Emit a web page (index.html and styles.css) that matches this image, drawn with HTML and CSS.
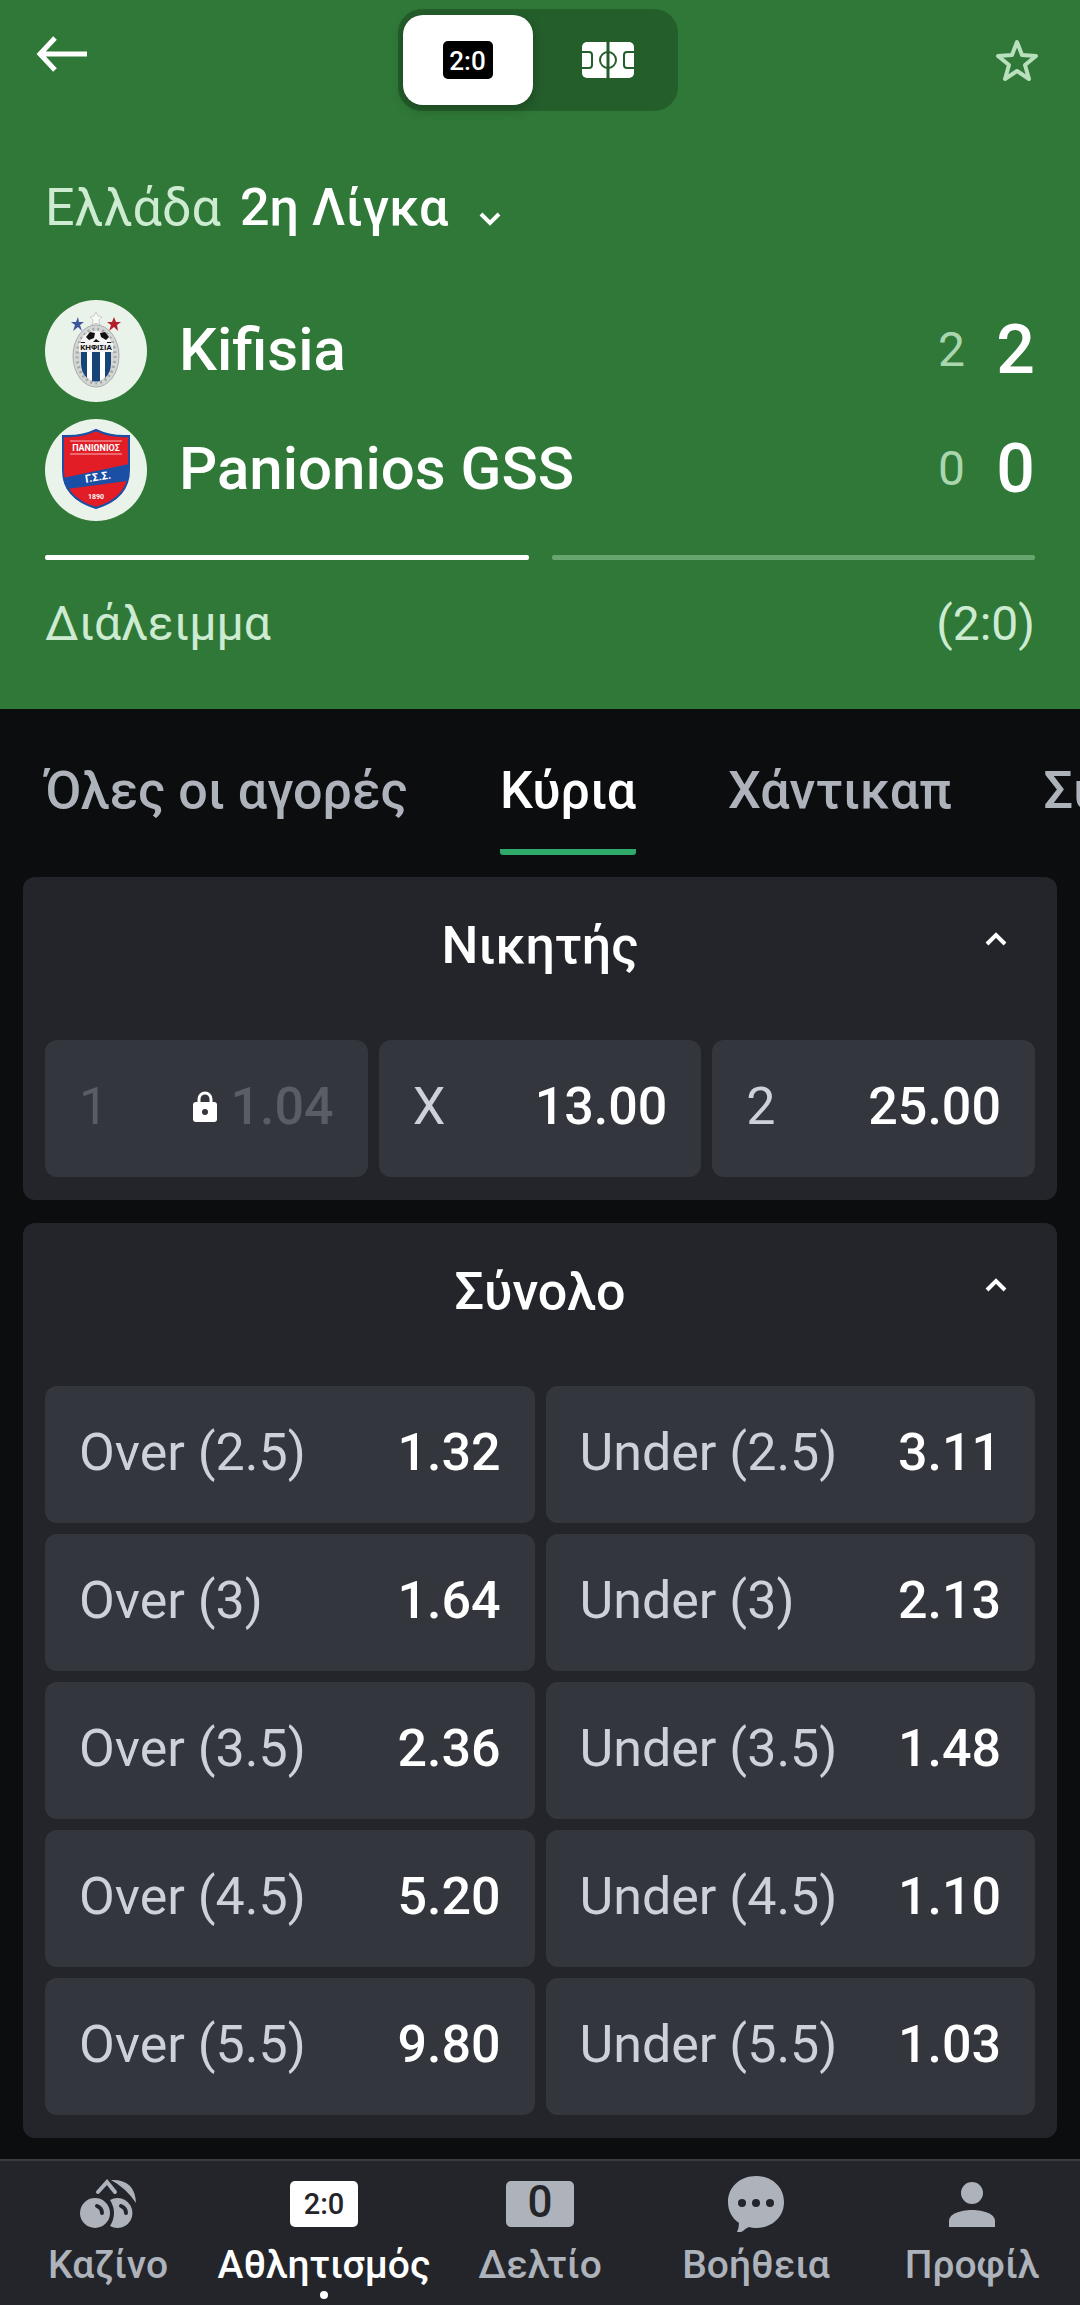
FILE: index.html
```html
<!DOCTYPE html>
<html lang="el">
<head>
    <meta charset="UTF-8">
    <meta name="viewport" content="width=device-width, initial-scale=1.0">
    <link rel="stylesheet" href="styles.css">
    <title>Kifisia - Panionios GSS</title>
</head>
<body>
    <header class="match">
        <div class="topbar">
            <button class="icon-button back" aria-label="Πίσω">
                <svg width="52" height="36" viewBox="0 0 52 36" fill="none" stroke="#fff" stroke-width="5">
                    <path d="M19 2 4 18l15 16M4 18h47"/>
                </svg>
            </button>
            <div class="switch">
                <button class="switch-item active"><span class="score-chip">2:0</span></button>
                <button class="switch-item" aria-label="Γήπεδο">
                    <svg width="52" height="36" viewBox="0 0 52 36">
                        <rect width="52" height="36" rx="5" fill="#fff"/>
                        <g fill="none" stroke="#245e2b" stroke-width="2">
                            <path d="M26 0v36" stroke-width="3"/>
                            <circle cx="26" cy="18" r="8"/>
                            <path d="M0 10h7q3 0 3 3v10q0 3-3 3H0M52 10h-7q-3 0-3 3v10q0 3 3 3h7"/>
                        </g>
                    </svg>
                </button>
            </div>
            <button class="icon-button favourite" aria-label="Αγαπημένα">
                <svg width="44" height="44" viewBox="0 0 44 44" fill="none" stroke="#b9e0bd" stroke-width="4" stroke-linejoin="round">
                    <path d="M22 4l5 13 14 1-11 9 4 14-12-8-12 8 4-14L3 18l14-1z"/>
                </svg>
            </button>
        </div>

        <button class="league">
            <span class="country">Ελλάδα</span>
            <span>2η Λίγκα</span>
            <svg class="league-arrow" width="22" height="15" viewBox="0 0 22 15" fill="none" stroke="#fff" stroke-width="4">
                <path d="M2 2l9 9 9-9"/>
            </svg>
        </button>

        <div class="team">
            <svg class="crest" viewBox="0 0 102 102">
                <circle cx="51" cy="51" r="51" fill="#e9f3ea"/>
                <path d="M51 12l2 4 4 1-3 3 1 5-4-2-4 2 1-5-3-3 4-1z" fill="#f8f8f4" stroke="#ccc" stroke-width="1"/>
                <path d="M33 17l1 5h5l-4 3 2 6-4-4-5 4 2-6-4-3h5z" fill="#3c559c"/>
                <path d="M69 17l2 5h5l-4 3 1 6-4-4-5 4 2-6-4-3h5z" fill="#b3202b"/>
                <ellipse cx="51" cy="56" rx="23" ry="31" fill="#d3d6d5" stroke="#a9adac"/>
                <ellipse cx="51" cy="56" rx="19" ry="27" fill="none" stroke="#a4a8a8" stroke-width="3" stroke-dasharray="2 3"/>
                <path d="M36 52h30v12q0 13-15 18-15-5-15-18z" fill="#fff"/>
                <path d="M36 52h6v26q-6-6-6-14zM47 52h8v29q-4 1-8 0zM60 52h6v12q0 8-6 14z" fill="#164477"/>
                <path d="M36 43a15 12 0 0 1 30 0z" fill="#f4f4f4"/>
                <path d="M41 37l4-5 5 1-1 5-5 2zM55 33l5-1 4 5-3 3-5-3zM48 42l3-3 4 3zM36 42h4v2h-4zM62 42h4v2h-4z" fill="#111"/>
                <rect x="34" y="43" width="34" height="9" fill="#f2f2f2"/>
                <text x="51" y="50" text-anchor="middle" class="crest-name">ΚΗΦΙΣΙΑ</text>
            </svg>
            <span class="team-name">Kifisia</span>
            <span class="half-score">2</span>
            <span class="full-score">2</span>
        </div>
        <div class="team">
            <svg class="crest" viewBox="0 0 102 102">
                <circle cx="51" cy="51" r="51" fill="#e9f3ea"/>
                <path d="M18 17q19 1 33-6 14 7 33 6v34q0 28-33 38Q18 79 18 51z" fill="#e21d26" stroke="#1a4fa5" stroke-width="2"/>
                <path d="M18 59l66-14v10q-1 4-2 7l-60 8q-3-5-4-11z" fill="#1a4fa5"/>
                <path d="M25 22h52M25 35h52" stroke="#f6b8b8" stroke-width="1"/>
                <text x="51" y="32" text-anchor="middle" class="crest-title">ΠΑΝΙΩΝΙΟΣ</text>
                <text x="53" y="62" text-anchor="middle" class="crest-initials" transform="rotate(-9 51 58)">Γ.Σ.Σ.</text>
                <text x="51" y="80" text-anchor="middle" class="crest-year">1890</text>
            </svg>
            <span class="team-name">Panionios GSS</span>
            <span class="half-score">0</span>
            <span class="full-score">0</span>
        </div>

        <div class="periods">
            <span class="period played"></span>
            <span class="period"></span>
        </div>
        <div class="status">
            <span>Διάλειμμα</span>
            <span>(2:0)</span>
        </div>
    </header>

    <nav class="tabs">
        <a class="tab" href="#">Όλες οι αγορές</a>
        <a class="tab active" href="#">Κύρια</a>
        <a class="tab" href="#">Χάντικαπ</a>
        <a class="tab" href="#">Σύνολο</a>
    </nav>

    <main class="markets">
        <section class="market">
            <button class="market-header">
                <span class="market-title">Νικητής</span>
                <svg width="22" height="15" viewBox="0 0 22 15" fill="none" stroke="#fff" stroke-width="4">
                    <path d="M2 12l9-9 9 9"/>
                </svg>
            </button>
            <div class="odds three">
                <button class="odd locked" disabled>
                    <span class="label">1</span>
                    <svg width="24" height="32" viewBox="0 0 24 32">
                        <path d="M6 12V8a6 6 0 0 1 12 0v4" fill="none" stroke="#fff" stroke-width="3"/>
                        <rect y="11" width="24" height="20" rx="3" fill="#fff"/>
                        <circle cx="12" cy="21" r="3" fill="#34363e"/>
                    </svg>
                    <span class="value">1.04</span>
                </button>
                <button class="odd"><span class="label">X</span><span class="value">13.00</span></button>
                <button class="odd"><span class="label">2</span><span class="value">25.00</span></button>
            </div>
        </section>

        <section class="market">
            <button class="market-header">
                <span class="market-title">Σύνολο</span>
                <svg width="22" height="15" viewBox="0 0 22 15" fill="none" stroke="#fff" stroke-width="4">
                    <path d="M2 12l9-9 9 9"/>
                </svg>
            </button>
            <div class="odds two">
                <button class="odd"><span class="label">Over (2.5)</span><span class="value">1.32</span></button>
                <button class="odd"><span class="label">Under (2.5)</span><span class="value">3.11</span></button>
                <button class="odd"><span class="label">Over (3)</span><span class="value">1.64</span></button>
                <button class="odd"><span class="label">Under (3)</span><span class="value">2.13</span></button>
                <button class="odd"><span class="label">Over (3.5)</span><span class="value">2.36</span></button>
                <button class="odd"><span class="label">Under (3.5)</span><span class="value">1.48</span></button>
                <button class="odd"><span class="label">Over (4.5)</span><span class="value">5.20</span></button>
                <button class="odd"><span class="label">Under (4.5)</span><span class="value">1.10</span></button>
                <button class="odd"><span class="label">Over (5.5)</span><span class="value">9.80</span></button>
                <button class="odd"><span class="label">Under (5.5)</span><span class="value">1.03</span></button>
            </div>
        </section>
    </main>

    <nav class="bottom-nav">
        <a class="nav-item" href="#">
            <span class="nav-icon">
                <svg width="60" height="56" viewBox="0 0 60 56" fill="#adb2bb">
                    <circle cx="17" cy="37" r="15"/>
                    <path d="M32 24a15 15 0 1 1 0 26q8-13 0-26z"/>
                    <path d="M33 4q24-1 25 23Q48 12 33 4z"/>
                    <path d="M20 16l9-10 8 10" fill="none" stroke="#adb2bb" stroke-width="4" stroke-linecap="round"/>
                    <path d="M19 30q5 2 5 7M43 30q5 2 5 7" fill="none" stroke="#23252a" stroke-width="4" stroke-linecap="round"/>
                </svg>
            </span>
            <span>Καζίνο</span>
        </a>
        <a class="nav-item active" href="#">
            <span class="nav-icon"><span class="nav-chip">2:0</span></span>
            <span>Αθλητισμός</span>
        </a>
        <a class="nav-item" href="#">
            <span class="nav-icon"><span class="nav-chip count">0</span></span>
            <span>Δελτίο</span>
        </a>
        <a class="nav-item" href="#">
            <span class="nav-icon">
                <svg width="56" height="56" viewBox="0 0 56 56" fill="#adb2bb">
                    <path d="M28 0c16 0 28 11 28 26S44 52 28 52q-4 0-7-1-3 1-6 4-3 2-6 1 2-4 2-9C4 42 0 35 0 26 0 11 12 0 28 0z"/>
                    <g fill="#23252a"><circle cx="14" cy="27" r="4"/><circle cx="28" cy="27" r="4"/><circle cx="42" cy="27" r="4"/></g>
                </svg>
            </span>
            <span>Βοήθεια</span>
        </a>
        <a class="nav-item" href="#">
            <span class="nav-icon">
                <svg width="46" height="46" viewBox="0 0 46 46" fill="#adb2bb">
                    <circle cx="23" cy="12" r="11"/>
                    <path d="M0 46v-6c0-7 11-11 23-11s23 4 23 11v6z"/>
                </svg>
            </span>
            <span>Προφίλ</span>
        </a>
    </nav>
</body>
</html>
```
FILE: styles.css
```css
* {
    box-sizing: border-box;
}

body {
    margin: 0;
    min-height: 100vh;
    display: flex;
    flex-direction: column;
    background: #0c0d0f;
    color: #fff;
    font-family: Roboto, "Noto Sans", sans-serif;
    font-size: 52px;
    line-height: 60px;
    overflow-x: hidden;
}

button {
    font: inherit;
    color: inherit;
    background: none;
    border: 0;
    padding: 0;
}

a {
    color: inherit;
    text-decoration: none;
}

svg {
    display: block;
    flex-shrink: 0;
}

/* match header */
.match {
    background: #2f7837;
    padding: 9px 45px 52px;
}

.topbar {
    display: grid;
    grid-template-columns: 1fr auto 1fr;
    align-items: center;
    margin: 0 -4px 0 -9px;
}

.back {
    justify-self: start;
    padding-bottom: 12px;
}

.favourite {
    justify-self: end;
}

.switch {
    display: flex;
    padding: 6px 5px;
    border-radius: 24px;
    background: #245e2b;
}

.switch-item {
    width: 130px;
    height: 90px;
    border-radius: 20px;
    display: flex;
    align-items: center;
    justify-content: center;
    margin-left: 10px;
}

.switch-item.active {
    margin-left: 0;
    background: #fff;
    box-shadow: 0 4px 12px rgba(0, 0, 0, 0.25);
}

.score-chip {
    width: 50px;
    height: 38px;
    border-radius: 5px;
    background: #000;
    color: #fff;
    font-size: 26px;
    font-weight: 500;
    line-height: 40px;
}

.league {
    display: flex;
    align-items: center;
    gap: 19px;
    margin-top: 67px;
    font-weight: 500;
}

.country {
    color: #cdebd0;
    font-weight: 400;
}

.league-arrow {
    margin: 22px 0 0 12px;
}

.team {
    display: flex;
    align-items: center;
    margin-top: 17px;
    height: 102px;
    line-height: 64px;
}

.league + .team {
    margin-top: 62px;
}

.crest {
    width: 102px;
    height: 102px;
    margin-right: 32px;
}

.crest text {
    fill: #fff;
    font-weight: 700;
}

.crest .crest-name {
    fill: #111;
    font-size: 8px;
}

.crest .crest-title {
    font-size: 9px;
}

.crest .crest-initials {
    font-size: 11px;
}

.crest .crest-year {
    font-size: 7px;
}

.team-name,
.half-score,
.full-score {
    padding-bottom: 3px;
}

.team-name {
    flex: 1;
    font-size: 60px;
    font-weight: 500;
}

.half-score {
    color: #a9d6ae;
    font-size: 48px;
}

.full-score {
    width: 70px;
    font-size: 68px;
    font-weight: 500;
    text-align: right;
}

.periods {
    display: flex;
    gap: 23px;
    margin-top: 34px;
}

.period {
    flex: 1;
    height: 5px;
    border-radius: 2px;
    background: #67a66e;
}

.period.played {
    background: #fff;
}

.status {
    display: flex;
    justify-content: space-between;
    margin-top: 32px;
    padding-bottom: 1px;
    color: #cdebd0;
    font-size: 48px;
    line-height: 64px;
}

/* market tabs */
.tabs {
    display: flex;
    gap: 92px;
    padding: 52px 45px 0;
    overflow: hidden;
    white-space: nowrap;
    font-weight: 500;
    color: #adb2bb;
}

.tab {
    padding-bottom: 34px;
}

.tab.active {
    color: #fff;
    background: linear-gradient(#2faa6a, #2faa6a) bottom / 100% 6px no-repeat;
    border-radius: 3px;
}

/* markets */
.markets {
    display: flex;
    flex-direction: column;
    gap: 23px;
    padding: 22px 23px 20px;
}

.market {
    padding: 0 22px 23px;
    border-radius: 12px;
    background: #23252a;
}

.market-header {
    display: flex;
    align-items: center;
    width: 100%;
    height: 163px;
    padding: 0 28px 26px;
}

.market-header svg {
    margin-bottom: 12px;
}

.market-title {
    flex: 1;
    padding-left: 22px;
    font-weight: 500;
}

.odds {
    display: grid;
    gap: 11px;
}

.odds.three {
    grid-template-columns: repeat(3, 1fr);
}

.odds.two {
    grid-template-columns: repeat(2, 1fr);
}

.odd {
    display: flex;
    align-items: center;
    height: 137px;
    padding: 0 34px 4px;
    border-radius: 12px;
    background: #34363e;
}

.label {
    flex: 1;
    color: #cfd1da;
    text-align: left;
}

.value {
    font-weight: 500;
}

.locked svg {
    margin-right: 14px;
}

.locked .label,
.locked .value {
    color: #5b5d64;
}

/* bottom navigation */
.bottom-nav {
    display: grid;
    grid-template-columns: repeat(5, minmax(0, 1fr));
    height: 146px;
    margin-top: auto;
    border-top: 2px solid #3a3a40;
    background: #23252a;
    color: #adb2bb;
    font-size: 39px;
    font-weight: 500;
    line-height: 46px;
}

.nav-item {
    display: flex;
    flex-direction: column;
    align-items: center;
    padding-top: 14px;
}

.nav-item.active {
    color: #fff;
}

.nav-item.active::after {
    content: "";
    width: 8px;
    height: 8px;
    margin-top: 3px;
    border-radius: 50%;
    background: #fff;
}

.nav-icon {
    display: flex;
    align-items: center;
    height: 58px;
    margin-bottom: 9px;
}

.nav-chip {
    width: 68px;
    height: 46px;
    border-radius: 5px;
    background: #fff;
    color: #23252a;
    font-size: 29px;
    line-height: 46px;
    text-align: center;
}

.nav-chip.count {
    background: #adb2bb;
    font-size: 44px;
    line-height: 42px;
}
```
